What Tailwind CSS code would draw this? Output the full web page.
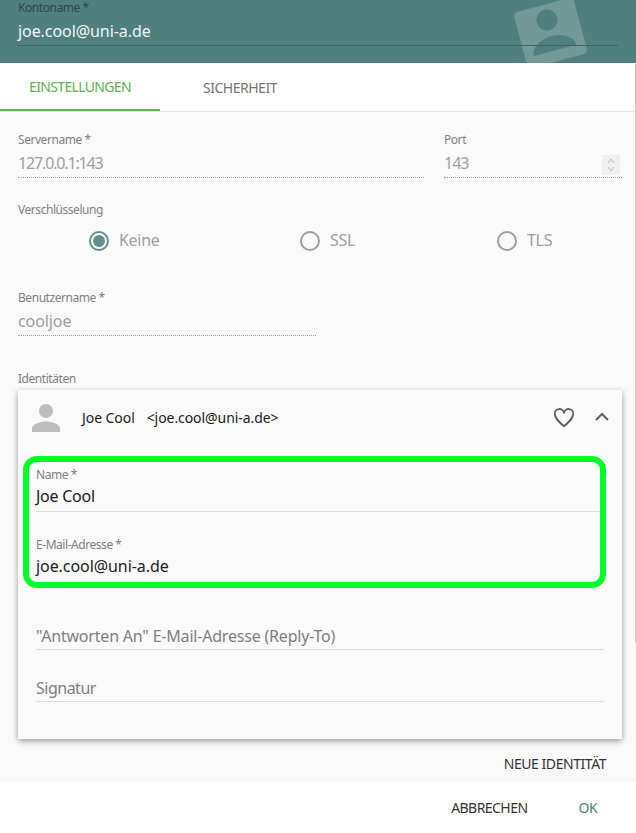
<!DOCTYPE html>
<html lang="de">
  <head>
    <meta charset="UTF-8" />
    <title>Konto</title>
    <script src="https://cdn.jsdelivr.net/npm/@tailwindcss/browser@4"></script>
  </head>
  <body class="bg-white font-['Noto_Sans',sans-serif] text-[#212121]">
    <div class="relative w-[636px] h-[833px] overflow-hidden flex flex-col">
      <!-- header -->
      <header class="relative h-[63px] shrink-0 bg-[#4f7f7f] overflow-hidden px-[18px]">
        <svg class="absolute left-[500px] top-0" width="136" height="63" viewBox="0 0 136 63">
          <g transform="rotate(-15 50.500 33)" fill="#fff" fill-opacity="0.2">
            <path fill-rule="evenodd" d="M24.500 4h52a5 5 0 0 1 5 5v48a5 5 0 0 1-5 5h-52a5 5 0 0 1-5-5V9a5 5 0 0 1 5-5zM50.500 9a10.500 10.500 0 1 0 0.010 0zM28.500 51h44c0-10-13.500-15-22-15s-22 5-22 15z"/>
          </g>
        </svg>
        <div class="relative text-[12px] leading-[14px] tracking-[-0.45px] text-[#2c4a4a] pt-[1px]">Kontoname *</div>
        <div class="relative text-[16px] leading-[20px] tracking-[-0.07px] text-[#f1f6f6] mt-[6px] pb-[4px] border-b border-[#3f6767]">joe.cool@uni-a.de</div>
      </header>

      <!-- tabs -->
      <nav class="h-[49px] shrink-0 flex border-b border-[#e0e0e0] text-[14px] pt-[1px]">
        <div class="w-[160px] h-[47px] flex items-center justify-center tracking-[-0.65px] text-[#5cb44f] border-b-2 border-[#5cb44f]">EINSTELLUNGEN</div>
        <div class="w-[160px] h-[47px] flex items-center justify-center tracking-[-0.5px] text-[#757575]">SICHERHEIT</div>
      </nav>

      <!-- content -->
      <main class="h-[671px] shrink-0 bg-[#fafafa] px-[18px] pt-[21px]">
        <div class="flex gap-[20px]">
          <div class="w-[406px] shrink-0">
            <div class="text-[12px] leading-[14px] tracking-[-0.45px] text-[#7f7f7f]">Servername *</div>
            <div class="text-[16px] leading-[20px] tracking-[-1.15px] text-[#9e9e9e] mt-[6px] pb-[4px] border-b border-dotted border-[#9e9e9e]">127.0.0.1:143</div>
          </div>
          <div class="w-[178px] shrink-0 relative">
            <div class="text-[12px] leading-[14px] tracking-[-0.45px] text-[#7f7f7f]">Port</div>
            <div class="text-[16px] leading-[20px] tracking-[-1px] text-[#9e9e9e] mt-[6px] pb-[4px] border-b border-dotted border-[#9e9e9e]">143</div>
            <div class="absolute right-[2px] top-[22px] w-[18px] h-[20px] bg-[#f0f0f0] flex items-center justify-center">
              <svg width="10" height="16" viewBox="0 0 10 16" fill="none" stroke="#bdbdbd" stroke-width="1"><path d="M2 6l3-4 3 4M2 10l3 4 3-4"/></svg>
            </div>
          </div>
        </div>

        <div class="text-[12px] leading-[14px] tracking-[-0.45px] text-[#7f7f7f] mt-[25px]">Verschlüsselung</div>
        <div class="flex mt-[13px] text-[16px] tracking-[-0.3px] text-[#9e9e9e] leading-[20px]">
          <label class="flex items-center gap-[10px] ml-[71px] w-[211px]">
            <span class="w-[20px] h-[20px] rounded-full border-2 border-[#5f8f8f] flex items-center justify-center"><span class="w-[12px] h-[12px] rounded-full bg-[#5f8f8f]"></span></span>
            <span class="pb-[2px]">Keine</span>
          </label>
          <label class="flex items-center gap-[10px] w-[197px]">
            <span class="w-[20px] h-[20px] rounded-full border-2 border-[#9e9e9e]"></span>
            <span class="pb-[2px]">SSL</span>
          </label>
          <label class="flex items-center gap-[10px]">
            <span class="w-[20px] h-[20px] rounded-full border-2 border-[#9e9e9e]"></span>
            <span class="pb-[2px]">TLS</span>
          </label>
        </div>

        <div class="w-[298px] mt-[39px]">
          <div class="text-[12px] leading-[14px] tracking-[-0.45px] text-[#7f7f7f]">Benutzername *</div>
          <div class="text-[16px] leading-[20px] tracking-[-0.1px] text-[#9e9e9e] mt-[6px] pb-[4px] border-b border-dotted border-[#9e9e9e]">cooljoe</div>
        </div>

        <div class="text-[12px] leading-[14px] tracking-[-0.45px] text-[#7f7f7f] mt-[36px]">Identitäten</div>

        <!-- identity card -->
        <section class="mt-[4px] w-[604px] h-[349px] bg-[#fafafa] shadow-[0_2px_6px_rgba(0,0,0,0.4)] px-[18px] relative">
          <div class="flex items-center h-[55px] text-[14px] tracking-[-0.07px] relative">
            <svg class="absolute left-[-11px] top-[7px]" width="42" height="42" viewBox="0 0 24 24" fill="#bdbdbd"><path d="M12 4a4 4 0 1 1 0 8 4 4 0 0 1 0-8zm0 10c-3 0-8 1.300-8 4v2h16v-2c0-2.700-5-4-8-4z"/></svg>
            <span class="ml-[46px]">Joe Cool</span>
            <span class="ml-[12px]">&lt;joe.cool@uni-a.de&gt;</span>
            <svg class="absolute left-[517px] top-[17px]" width="22" height="22" viewBox="0 0 24 24" fill="none" stroke="#616161" stroke-width="2" stroke-linejoin="round"><path d="M12 21C5 15 2 12 2 8a5 5 0 0 1 10-1.500A5 5 0 0 1 22 8c0 4-3 7-10 13z"/></svg>
            <svg class="absolute left-[558px] top-[20px]" width="16" height="14" viewBox="0 0 16 14" fill="none" stroke="#616161" stroke-width="2"><path d="M2 10l6-6 6 6"/></svg>
          </div>

          <!-- green highlight over Name / E-Mail -->
          <div class="absolute left-[5px] top-[66px] w-[583px] h-[132px] border-[6px] border-[#00ff2a] rounded-[14px] pointer-events-none"></div>

          <div class="pt-[23px]">
            <div class="text-[12px] leading-[14px] tracking-[-0.45px] text-[#7f7f7f]">Name *</div>
            <div class="text-[16px] leading-[20px] tracking-[-0.25px] mt-[4px] pb-[5px] border-b border-[#dcdcdc]">Joe Cool</div>
            <div class="text-[12px] leading-[14px] tracking-[-0.45px] text-[#7f7f7f] mt-[26px]">E-Mail-Adresse *</div>
            <div class="text-[16px] leading-[20px] tracking-[-0.07px] mt-[4px] pb-[5px]">joe.cool@uni-a.de</div>
            <div class="text-[16px] leading-[20px] tracking-[-0.2px] text-[#7f7f7f] mt-[45px] pb-[3px] border-b border-[#dcdcdc]">"Antworten An" E-Mail-Adresse (Reply-To)</div>
            <div class="text-[16px] leading-[20px] tracking-[-0.5px] text-[#7f7f7f] mt-[28px] pb-[3px] border-b border-[#dcdcdc]">Signatur</div>
          </div>
        </section>

        <div class="flex justify-end w-[588px] mt-[14px] text-[14px] tracking-[-0.45px] text-[#333]">NEUE IDENTITÄT</div>
      </main>

      <!-- footer -->
      <footer class="flex-1 flex justify-end items-center gap-[51px] pr-[39px] pb-[2px] text-[14px] tracking-[-0.55px]">
        <span class="text-[#333]">ABBRECHEN</span>
        <span class="text-[#4f7f7f]">OK</span>
      </footer>

      <!-- scrollbar edge -->
      <div class="absolute right-0 top-[64px] w-[1px] h-[579px] bg-[#c8c8c8]"></div>
    </div>
  </body>
</html>
